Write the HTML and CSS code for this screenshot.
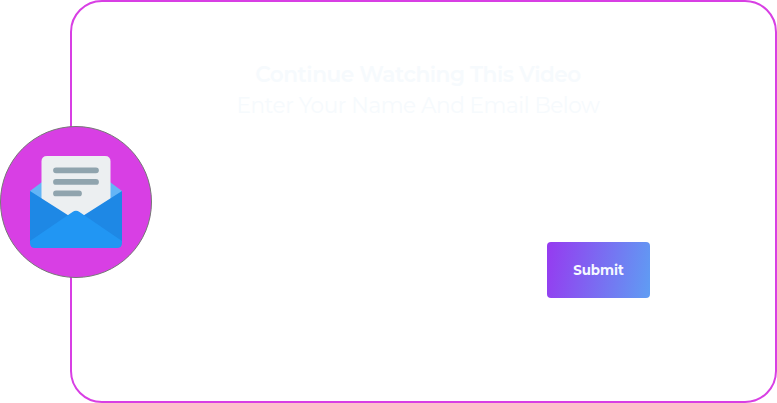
FILE: index.html
```html
<!DOCTYPE html>
<html lang="en">
<head>
<meta charset="utf-8">
<title>Continue Watching</title>
<link rel="stylesheet" href="styles.css">
</head>
<body>
<main class="card">
  <div class="badge">
    <svg class="envelope" viewBox="0 0 92 92" aria-hidden="true">
      <path fill="#64b5f6" d="M0 35 12 26V43H0ZM92 35 80 26V43H92Z"/>
      <path fill="#eceff1" d="M11.500 5.500Q11.500 0 17 0H75Q80.500 0 80.500 5.500V60H11.500Z"/>
      <path fill="none" stroke="#90a4ae" stroke-width="5.800" stroke-linecap="round" d="M26 14.300H66M26 25.900H66M26 37.400H49"/>
      <path fill="#1e88e5" d="M0 35 38.500 59.500H53.500L92 35V86H0Z"/>
      <path fill="#2196f3" d="M0 85 42.500 56Q46 53.500 49.500 56L92 85V87Q92 92 87 92H5Q0 92 0 87Z"/>
    </svg>
  </div>
  <form class="form">
    <h1 class="heading"><span class="strong">Continue Watching This Video</span><span class="light">Enter Your Name And Email Below</span></h1>
    <button class="submit" type="button"><span class="submit-label">Submit</span></button>
  </form>
</main>
</body>
</html>
```
FILE: styles.css
```css
* { box-sizing: border-box; }
body { margin: 0; background: #fff; font-family: Montserrat, Inter, sans-serif; }
.card {
  position: relative;
  height: 403px;
  margin-left: 70px;
  border: 2px solid #d83fe4;
  border-radius: 32px;
  background: #fff;
}
.badge {
  position: absolute;
  left: -72px;
  top: 124px;
  width: 152px;
  height: 152px;
  display: flex;
  align-items: center;
  justify-content: center;
  border: 1px solid #777;
  border-radius: 50%;
  background: #d83fe4;
}
.envelope { width: 92px; height: 92px; }
.form {
  display: flex;
  flex-direction: column;
  padding: 57px 125px 0 113px;
}
.heading {
  margin: 0 0 0 1px;
  align-self: center;
  display: flex;
  flex-direction: column;
  align-items: center;
  font-size: 21.500px;
  line-height: 31px;
  color: #f6fafd;
  white-space: nowrap;
}
.strong { font-weight: 600; letter-spacing: -0.38px; }
.light { font-weight: 400; letter-spacing: -0.38px; }
.submit {
  align-self: flex-end;
  width: 103px;
  height: 56px;
  margin: 121px 0 0;
  padding: 0;
  border: 0;
  border-radius: 4px;
  background: linear-gradient(100deg, #963af0, #5f9df3);
  color: #f5f8ff;
  font: 700 15px/56px Montserrat, Inter, sans-serif;
}
.submit-label { display: inline-block; transform: scaleX(0.89); }
```
